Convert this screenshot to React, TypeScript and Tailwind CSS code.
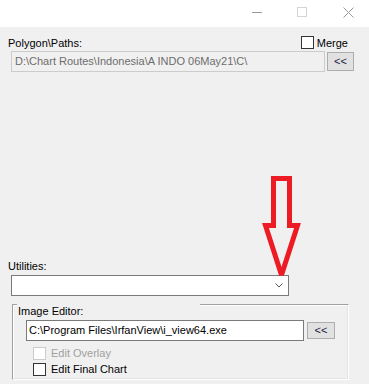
import React from "react";

const Check = ({ disabled }: { disabled?: boolean }) => (
  <div
    className={
      "w-[13px] h-[13px] border bg-white shrink-0 " +
      (disabled ? "border-[#cccccc]" : "border-[#333333]")
    }
  />
);

export default function App() {
  return (
    <div
      className="w-[369px] h-[384px] bg-[#f0f0f0] relative overflow-hidden flex flex-col text-[11px] leading-[13px] text-black"
      style={{ fontFamily: '"Liberation Sans", Arial, sans-serif' }}
    >
      {/* Title bar */}
      <div className="h-[27px] bg-white flex items-start shrink-0">
        <svg className="ml-[252px] mt-[12px]" width="10" height="1" viewBox="0 0 10 1">
          <rect x="0" y="0" width="10" height="1" fill="#9a9a9a" />
        </svg>
        <svg className="ml-[35px] mt-[7px]" width="10" height="10" viewBox="0 0 10 10">
          <rect x="0.5" y="0.5" width="9" height="9" fill="none" stroke="#d4d4d4" />
        </svg>
        <svg className="ml-[36px] mt-[7px]" width="11" height="11" viewBox="0 0 11 11">
          <path d="M0.5 0.5 L10.5 10.5 M10.5 0.5 L0.5 10.5" stroke="#9a9a9a" strokeWidth="1" />
        </svg>
      </div>

      {/* Polygon row */}
      <div className="mt-[9px] h-[13px] flex items-center shrink-0">
        <span className="ml-[8px] pt-[2px]">Polygon\Paths:</span>
        <div className="ml-auto mr-[21px] flex items-center">
          <Check />
          <span className="ml-[3px] pt-[2px]">Merge</span>
        </div>
      </div>

      {/* Path row */}
      <div className="mt-[2px] h-[21px] flex items-start shrink-0">
        <div className="ml-[11px] w-[314px] h-[21px] border border-[#cccccc] bg-[#f0f0f0] text-[#6d6d6d] pl-[3px] flex items-center whitespace-nowrap overflow-hidden">
          D:\Chart Routes\Indonesia\A INDO 06May21\C\
        </div>
        <div className="ml-[2px] mt-[1px] w-[27px] h-[19px] border border-[#adadad] bg-[#e1e1e1] flex items-center justify-center text-[#1a1a40]">
          &lt;&lt;
        </div>
      </div>

      {/* Utilities */}
      <div className="mt-[188px] h-[13px] shrink-0">
        <span className="ml-[8px]">Utilities:</span>
      </div>
      <div className="mt-[2px] ml-[11px] w-[278px] h-[21px] border border-[#7a7a7a] bg-white relative shrink-0 flex items-center justify-end">
        <svg className="mr-[5px]" width="8" height="5" viewBox="0 0 8 5">
          <path d="M0.5 0.5 L4 4 L7.5 0.5" fill="none" stroke="#555555" strokeWidth="1" />
        </svg>
      </div>

      {/* Image Editor group */}
      <div className="mt-[8px] ml-[12px] w-[337px] h-[76px] border border-t-[#a0a0a0] border-l-[#a0a0a0] border-r-white border-b-white relative shrink-0">
        <div className="w-full h-full border border-t-white border-l-white border-r-[#e3e3e3] border-b-[#e3e3e3] flex flex-col">
          <div className="mt-[14px] flex items-start">
            <div className="ml-[12px] w-[278px] h-[21px] border border-[#7a7a7a] bg-white pl-[2px] flex items-center whitespace-nowrap overflow-hidden">
              C:\Program Files\IrfanView\i_view64.exe
            </div>
            <div className="ml-[3px] mt-[2px] w-[28px] h-[17px] border border-[#adadad] bg-[#e1e1e1] flex items-center justify-center text-[#1a1a40]">
              &lt;&lt;
            </div>
          </div>
          <div className="mt-[6px] ml-[19px] flex items-center h-[13px]">
            <Check disabled />
            <span className="ml-[5px] text-[#a0a0a0]">Edit Overlay</span>
          </div>
          <div className="mt-[3px] ml-[19px] flex items-center h-[13px]">
            <Check />
            <span className="ml-[5px]">Edit Final Chart</span>
          </div>
        </div>
        <div className="absolute left-[4px] top-[-2px] w-[183px] h-[12px] bg-[#f0f0f0] pl-[1px] pt-[2px] leading-[13px]">
          Image Editor:
        </div>
      </div>

      {/* Red arrow annotation */}
      <svg className="absolute left-0 top-0 pointer-events-none" width="369" height="384" viewBox="0 0 369 384">
        <polygon
          points="273.5,178.5 289.5,178.5 289.5,225.5 297.5,225.5 281.5,275 265.5,225.5 273.5,225.5"
          fill="none"
          stroke="#ed1c24"
          strokeWidth="5"
          strokeLinejoin="miter"
          strokeMiterlimit="2"
        />
      </svg>
    </div>
  );
}
